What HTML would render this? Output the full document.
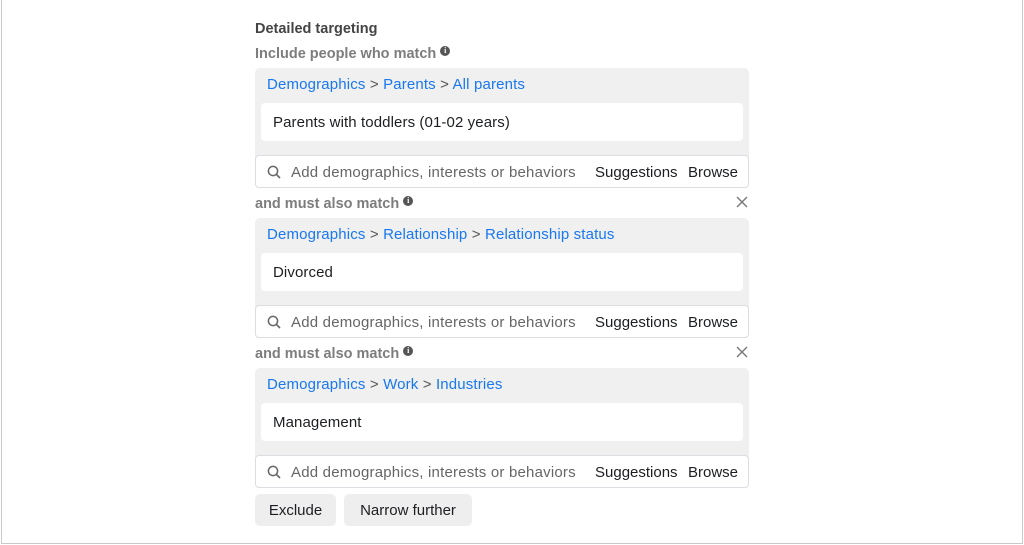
<!DOCTYPE html>
<html><head><meta charset="utf-8"><style>
*{margin:0;padding:0;box-sizing:border-box}
body{width:1024px;height:545px;background:#fff;position:relative;overflow:hidden;font-family:"Liberation Sans",Arial,sans-serif;color:#1c1e21}
.frame{position:absolute;left:1px;top:-2px;width:1022px;height:546px;border:1px solid #c9c9c9}
.a{position:absolute;white-space:nowrap}
.h{font-weight:bold;font-size:14.5px;color:#444}
.sub{font-weight:bold;font-size:14.5px;color:#7d7d7d}
.info{display:inline-block;width:10px;height:10px;border-radius:50%;background:#555;color:#fff;font-size:8px;line-height:10px;text-align:center;font-weight:bold;vertical-align:5px;margin-left:4px;font-family:"Liberation Serif",serif}
.gbox{position:absolute;left:255px;width:494px;height:120px;background:#f0f0f0;border-radius:5px}
.crumb{position:absolute;left:12px;top:8px;font-size:15px;color:#555;letter-spacing:0.15px}
.crumb b{font-weight:normal;color:#1877f2}
.white{position:absolute;left:6px;top:35px;width:482px;height:38px;background:#fff;border-radius:4px;font-size:15px;padding:11px 12px;color:#1c1e21;letter-spacing:0.1px}
.search{position:absolute;left:0;top:87px;width:494px;height:33px;background:#fff;border:1px solid #dadde1;border-radius:4px;font-size:15px}
.search .ph{position:absolute;left:35px;top:8px;color:#666;letter-spacing:0.2px}
.search .sg{position:absolute;left:339px;top:8px;color:#1c1e21}
.search .br{position:absolute;left:432px;top:8px;color:#1c1e21}
.search svg{position:absolute;left:11px;top:9px}
.x{position:absolute;left:736px}
.btn{position:absolute;top:494px;height:32px;background:#eeeeee;border-radius:5px;font-size:15px;color:#1c1e21;text-align:center;line-height:32px}
</style></head><body>
<div class="frame"></div>
<div class="a h" style="left:255px;top:21px">Detailed targeting</div>
<div class="a sub" style="left:255px;top:46px">Include people who match<span class="info">i</span></div>

<div class="gbox" style="top:68px">
 <div class="crumb"><b>Demographics</b> &gt; <b>Parents</b> &gt; <b>All parents</b></div>
 <div class="white">Parents with toddlers (01-02 years)</div>
 <div class="search"><svg width="14" height="14" viewBox="0 0 14 14"><circle cx="6" cy="6" r="4.6" fill="none" stroke="#666" stroke-width="1.5"/><path d="M9.4 9.4L13 13" stroke="#666" stroke-width="1.6"/></svg><span class="ph">Add demographics, interests or behaviors</span><span class="sg">Suggestions</span><span class="br">Browse</span></div>
</div>

<div class="a sub" style="left:255px;top:196px">and must also match<span class="info">i</span></div>
<svg class="x" style="top:196px" width="12" height="12" viewBox="0 0 12 12"><path d="M1 1L11 11M11 1L1 11" stroke="#777" stroke-width="1.4"/></svg>
<div class="gbox" style="top:218px">
 <div class="crumb"><b>Demographics</b> &gt; <b>Relationship</b> &gt; <b>Relationship status</b></div>
 <div class="white">Divorced</div>
 <div class="search"><svg width="14" height="14" viewBox="0 0 14 14"><circle cx="6" cy="6" r="4.6" fill="none" stroke="#666" stroke-width="1.5"/><path d="M9.4 9.4L13 13" stroke="#666" stroke-width="1.6"/></svg><span class="ph">Add demographics, interests or behaviors</span><span class="sg">Suggestions</span><span class="br">Browse</span></div>
</div>

<div class="a sub" style="left:255px;top:346px">and must also match<span class="info">i</span></div>
<svg class="x" style="top:346px" width="12" height="12" viewBox="0 0 12 12"><path d="M1 1L11 11M11 1L1 11" stroke="#777" stroke-width="1.4"/></svg>
<div class="gbox" style="top:368px">
 <div class="crumb"><b>Demographics</b> &gt; <b>Work</b> &gt; <b>Industries</b></div>
 <div class="white">Management</div>
 <div class="search"><svg width="14" height="14" viewBox="0 0 14 14"><circle cx="6" cy="6" r="4.6" fill="none" stroke="#666" stroke-width="1.5"/><path d="M9.4 9.4L13 13" stroke="#666" stroke-width="1.6"/></svg><span class="ph">Add demographics, interests or behaviors</span><span class="sg">Suggestions</span><span class="br">Browse</span></div>
</div>

<div class="btn" style="left:255px;width:81px;line-height:33px">Exclude</div>
<div class="btn" style="left:344px;width:128px;line-height:33px">Narrow further</div>
</body></html>
